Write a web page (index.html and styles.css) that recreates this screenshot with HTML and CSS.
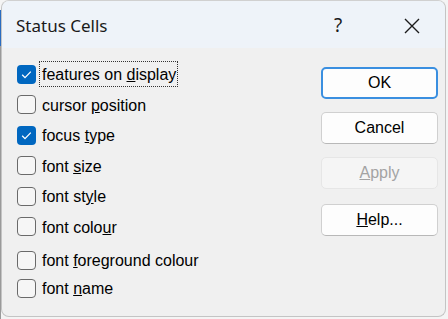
FILE: index.html
```html
<!DOCTYPE html>
<html>
<head>
<meta charset="utf-8">
<link rel="stylesheet" href="styles.css">
</head>
<body>
<div class="desk">
  <div class="window">
    <div class="titlebar">
      <div class="title">Status Cells</div>
      <div class="tb-help">?</div>
      <div class="tb-close">
        <svg width="16" height="16" viewBox="0 0 16 16"><path d="M1 1 L15 15 M15 1 L1 15" stroke="#1b1b1b" stroke-width="1.4" fill="none"/></svg>
      </div>
    </div>
    <div class="content">
      <div class="list">
        <div class="row"><span class="box checked"><svg width="19" height="19" viewBox="0 0 19 19"><path d="M5.2 9.8 L8 12.6 L13.8 6.6" stroke="#fff" stroke-width="1.3" fill="none"/></svg></span><span class="lbl focus">features on <u>d</u>isplay</span></div>
        <div class="row"><span class="box"></span><span class="lbl">cursor <u>p</u>osition</span></div>
        <div class="row"><span class="box checked"><svg width="19" height="19" viewBox="0 0 19 19"><path d="M5.2 9.8 L8 12.6 L13.8 6.6" stroke="#fff" stroke-width="1.3" fill="none"/></svg></span><span class="lbl">focus <u>t</u>ype</span></div>
        <div class="row"><span class="box"></span><span class="lbl">font <u>s</u>ize</span></div>
        <div class="row"><span class="box"></span><span class="lbl">font st<u>y</u>le</span></div>
        <div class="row"><span class="box"></span><span class="lbl">font colo<u>u</u>r</span></div>
        <div class="row row-fg"><span class="box"></span><span class="lbl">font <u>f</u>oreground colour</span></div>
        <div class="row row-name"><span class="box"></span><span class="lbl">font <u>n</u>ame</span></div>
      </div>
      <div class="buttons">
        <div class="btn default">OK</div>
        <div class="btn">Cancel</div>
        <div class="btn disabled"><u>A</u>pply</div>
        <div class="btn help"><u>H</u>elp...</div>
      </div>
    </div>
  </div>
</div>
</body>
</html>
```
FILE: styles.css
```css
html, body {
  margin: 0;
  padding: 0;
  background: #f4f4f4;
}
.desk {
  width: 448px;
  height: 319px;
  overflow: hidden;
  background: linear-gradient(to bottom, #f4f4f4 0, #f4f4f4 10px, #2a6cc0 10px, #2a6cc0 46px, #9a9a9a 46px);
  background-size: 1px 100%;
  background-repeat: no-repeat;
  background-color: #f4f4f4;
}
.window {
  margin-left: 1px;
  width: 443px;
  height: 315px;
  border: 1px solid #c4c4c4;
  border-top-color: #d0d0d0;
  border-radius: 8px;
  overflow: hidden;
  background: #f0f0f0;
  font-family: "Liberation Sans", Arial, sans-serif;
  color: #000;
}
.titlebar {
  height: 47px;
  background: #eef3f9;
  display: flex;
  align-items: center;
}
.title {
  font-family: "Noto Sans", "Open Sans", sans-serif;
  font-size: 17px;
  color: #1a1a1a;
  padding-left: 14px;
  padding-top: 2px;
  flex: 1;
}
.tb-help {
  font-family: "Noto Sans", sans-serif;
  font-size: 19px;
  color: #1a1a1a;
  width: 20px;
  text-align: center;
  margin-right: 56px;
  padding-top: 1px;
}
.tb-close {
  width: 16px;
  height: 16px;
  margin-right: 25px;
  margin-top: 2px;
}
.tb-close svg { display: block; }
.content {
  display: flex;
}
.list {
  flex: 1;
  padding-left: 15px;
  padding-top: 11px;
  display: flex;
  flex-direction: column;
}
.row {
  height: 30.5px;
  display: flex;
  align-items: center;
  gap: 3px;
}
.row-fg { margin-top: 3px; }
.row-name { margin-top: -2.5px; }
.box {
  width: 17px;
  height: 17px;
  border: 1px solid #6a6a6a;
  border-radius: 4px;
  background: #f6f6f6;
  flex: none;
}
.box.checked {
  width: 19px;
  height: 19px;
  border: none;
  background: #0067c0;
}
.box svg { display: block; }
.lbl {
  font-size: 16px;
  line-height: 18px;
  padding: 4px 1px 2px 2px;
  border: 1px dotted transparent;
  white-space: nowrap;
}
.lbl.focus {
  border-color: #333;
}
.lbl u { text-underline-offset: 1px; }
.buttons {
  width: 117px;
  margin-right: 7px;
  padding-top: 19px;
  display: flex;
  flex-direction: column;
}
.btn {
  height: 30px;
  border: 1px solid #d0d0d0;
  border-bottom-color: #b8b8b8;
  border-radius: 5px;
  background: #fdfdfd;
  font-size: 16px;
  line-height: 30px;
  text-align: center;
  margin-bottom: 13px;
  box-sizing: content-box;
}
.btn.default {
  height: 28px;
  line-height: 28px;
  border: 2px solid #3a8fe0;
  background: #fdfdfd;
}
.btn.disabled {
  background: #f5f5f5;
  border-color: #e6e6e6;
  color: #a3a3a3;
  margin-bottom: 15px;
}
.btn u { text-underline-offset: 1px; }
```
